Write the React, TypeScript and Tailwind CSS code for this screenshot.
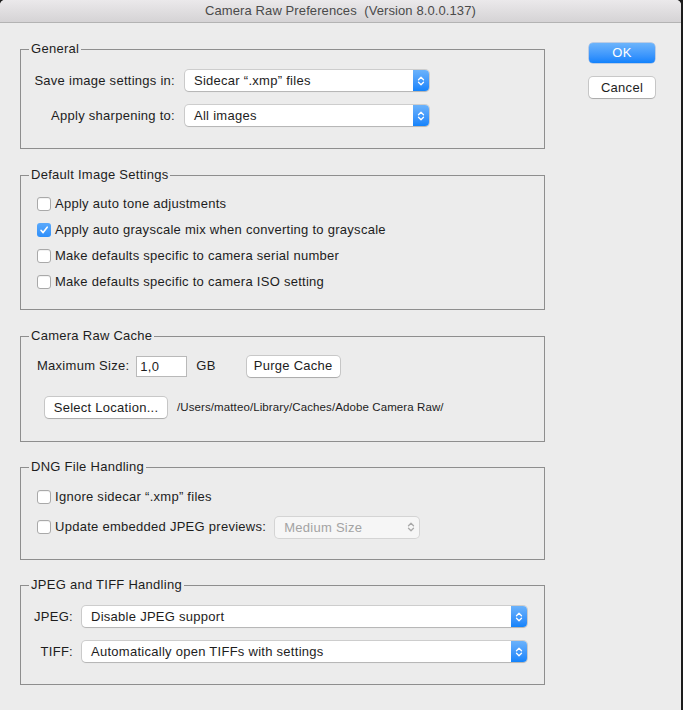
import React from "react";

/* ---------- small mac controls ---------- */

function Chevrons({ color }: { color: string }) {
  return (
    <svg width="8" height="12" viewBox="0 0 8 12" fill="none">
      <path d="M1.5 4.8 L4 2.3 L6.5 4.8" stroke={color} strokeWidth="1.3" strokeLinecap="round" strokeLinejoin="round" />
      <path d="M1.5 7.2 L4 9.7 L6.5 7.2" stroke={color} strokeWidth="1.3" strokeLinecap="round" strokeLinejoin="round" />
    </svg>
  );
}

function Popup({ text, className = "" }: { text: string; className?: string }) {
  return (
    <div
      className={`flex h-[21px] items-stretch rounded-[4px] bg-white shadow-[0_0_0_1px_rgba(0,0,0,0.13),0_1px_1px_rgba(0,0,0,0.12)] ${className}`}
    >
      <div className="flex-1 pl-[9px] leading-[21px] text-[#1d1d1d]">{text}</div>
      <div className="flex w-[16px] items-center justify-center rounded-r-[4px] bg-gradient-to-b from-[#6ab2fb] to-[#1183fb]">
        <Chevrons color="#ffffff" />
      </div>
    </div>
  );
}

function DisabledPopup({ text, className = "" }: { text: string; className?: string }) {
  return (
    <div
      className={`flex h-[21px] items-stretch rounded-[4px] bg-[#f6f6f6] shadow-[0_0_0_1px_rgba(0,0,0,0.1)] ${className}`}
    >
      <div className="flex-1 pl-[9px] leading-[21px] text-[#a3a3a3]">{text}</div>
      <div className="flex w-[16px] items-center justify-center">
        <Chevrons color="#a9a9a9" />
      </div>
    </div>
  );
}

function Checkbox({ checked = false }: { checked?: boolean }) {
  if (checked) {
    return (
      <div className="flex h-[14px] w-[14px] shrink-0 items-center justify-center rounded-[3px] bg-gradient-to-b from-[#5aa9fb] to-[#2d8ffa]">
        <svg width="10" height="10" viewBox="0 0 10 10" fill="none">
          <path d="M2 5.3 L4.1 7.6 L8.2 2.2" stroke="#ffffff" strokeWidth="1.6" strokeLinecap="round" strokeLinejoin="round" />
        </svg>
      </div>
    );
  }
  return (
    <div className="h-[14px] w-[14px] shrink-0 rounded-[3px] border border-[#a9a9a9] bg-white shadow-[inset_0_1px_0_rgba(0,0,0,0.05)]" />
  );
}

function PushButton({ label, className = "" }: { label: string; className?: string }) {
  return (
    <div
      className={`flex h-[21px] items-center justify-center rounded-[4px] bg-white text-[#1d1d1d] shadow-[0_0_0_1px_rgba(0,0,0,0.15),0_1px_1px_rgba(0,0,0,0.15)] ${className}`}
    >
      {label}
    </div>
  );
}

function CheckRow({ label, checked }: { label: string; checked?: boolean }) {
  return (
    <div className="flex h-[26px] items-center gap-[4px] pl-[16px]">
      <Checkbox checked={checked} />
      <span>{label}</span>
    </div>
  );
}

function GroupBox({
  title,
  className = "",
  children,
}: {
  title: string;
  className?: string;
  children: React.ReactNode;
}) {
  return (
    <div className={`w-[525px] border border-[#8e8e8e] ${className}`}>
      <div className="-mt-[9px] ml-[8px] w-fit bg-[#ececec] px-[2px] leading-[16px] text-[#1d1d1d]">
        {title}
      </div>
      {children}
    </div>
  );
}

/* ---------- window ---------- */

export default function App() {
  return (
    <div className="h-[710px] w-[683px] bg-[#1c1c1c] font-['Liberation_Sans',Arial,sans-serif] text-[13px] tracking-[0.27px] text-[#1d1d1d]">
      <div className="h-[710px] w-[681px] overflow-hidden rounded-t-[5px] bg-[#ececec]">
        {/* title bar */}
        <div className="h-[23px] border-b border-[#b3b3b3] bg-gradient-to-b from-[#ebe9eb] to-[#d5d3d5] text-center leading-[22px] tracking-[0.1px] text-[#4a4a4a]">
          Camera Raw Preferences&nbsp;&nbsp;(Version 8.0.0.137)
        </div>

        <div className="flex">
          {/* left column with the groups */}
          <div className="pl-[20px] pt-[26px]">
            <GroupBox title="General" className="h-[100px]">
              <div className="flex flex-col gap-[14px] pt-[13px]">
                <div className="flex items-center gap-[10px]">
                  <div className="w-[154px] text-right">Save image settings in:</div>
                  <Popup text="Sidecar “.xmp” files" className="w-[244px]" />
                </div>
                <div className="flex items-center gap-[10px]">
                  <div className="w-[154px] text-right">Apply sharpening to:</div>
                  <Popup text="All images" className="w-[244px]" />
                </div>
              </div>
            </GroupBox>

            <GroupBox title="Default Image Settings" className="mt-[26px] h-[135px]">
              <div className="pt-[8px]">
                <CheckRow label="Apply auto tone adjustments" />
                <CheckRow label="Apply auto grayscale mix when converting to grayscale" checked />
                <CheckRow label="Make defaults specific to camera serial number" />
                <CheckRow label="Make defaults specific to camera ISO setting" />
              </div>
            </GroupBox>

            <GroupBox title="Camera Raw Cache" className="mt-[26px] h-[106px]">
              <div className="pl-[16px] pt-[11px]">
                <div className="flex h-[22px] items-center">
                  <span>Maximum Size:</span>
                  <div className="ml-[7px] h-[21px] w-[51px] border border-[#b9b9b9] bg-white pl-[3px] leading-[19px]">
                    1,0
                  </div>
                  <span className="ml-[9px]">GB</span>
                  <PushButton label="Purge Cache" className="ml-[31px] w-[93px]" />
                </div>
                <div className="mt-[20px] flex items-center gap-[10px] pl-[8px]">
                  <PushButton label="Select Location..." className="w-[122px]" />
                  <span className="text-[11.5px] tracking-[0.1px]">
                    /Users/matteo/Library/Caches/Adobe Camera Raw/
                  </span>
                </div>
              </div>
            </GroupBox>

            <GroupBox title="DNG File Handling" className="mt-[25px] h-[93px]">
              <div className="flex flex-col gap-[8px] pt-[11px]">
                <div className="flex h-[22px] items-center gap-[4px] pl-[16px]">
                  <Checkbox />
                  <span>Ignore sidecar “.xmp” files</span>
                </div>
                <div className="flex h-[22px] items-center gap-[4px] pl-[16px]">
                  <Checkbox />
                  <span>Update embedded JPEG previews:</span>
                  <DisabledPopup text="Medium Size" className="ml-[5px] w-[144px]" />
                </div>
              </div>
            </GroupBox>

            <GroupBox title="JPEG and TIFF Handling" className="mt-[25px] h-[100px]">
              <div className="flex flex-col gap-[14px] pt-[13px]">
                <div className="flex items-center gap-[9px]">
                  <div className="w-[52px] text-right">JPEG:</div>
                  <Popup text="Disable JPEG support" className="w-[445px]" />
                </div>
                <div className="flex items-center gap-[9px]">
                  <div className="w-[52px] text-right">TIFF:</div>
                  <Popup text="Automatically open TIFFs with settings" className="w-[445px]" />
                </div>
              </div>
            </GroupBox>
          </div>

          {/* right column: dialog buttons */}
          <div className="ml-[44px] flex flex-col gap-[14px] pt-[20px]">
            <div className="flex h-[20px] w-[66px] items-center justify-center rounded-[4px] bg-gradient-to-b from-[#6cb4fb] to-[#0f82fc] text-white shadow-[0_0_0_0.5px_rgba(0,80,200,0.4)]">
              OK
            </div>
            <PushButton label="Cancel" className="h-[20px] w-[66px]" />
          </div>
        </div>
      </div>
    </div>
  );
}
